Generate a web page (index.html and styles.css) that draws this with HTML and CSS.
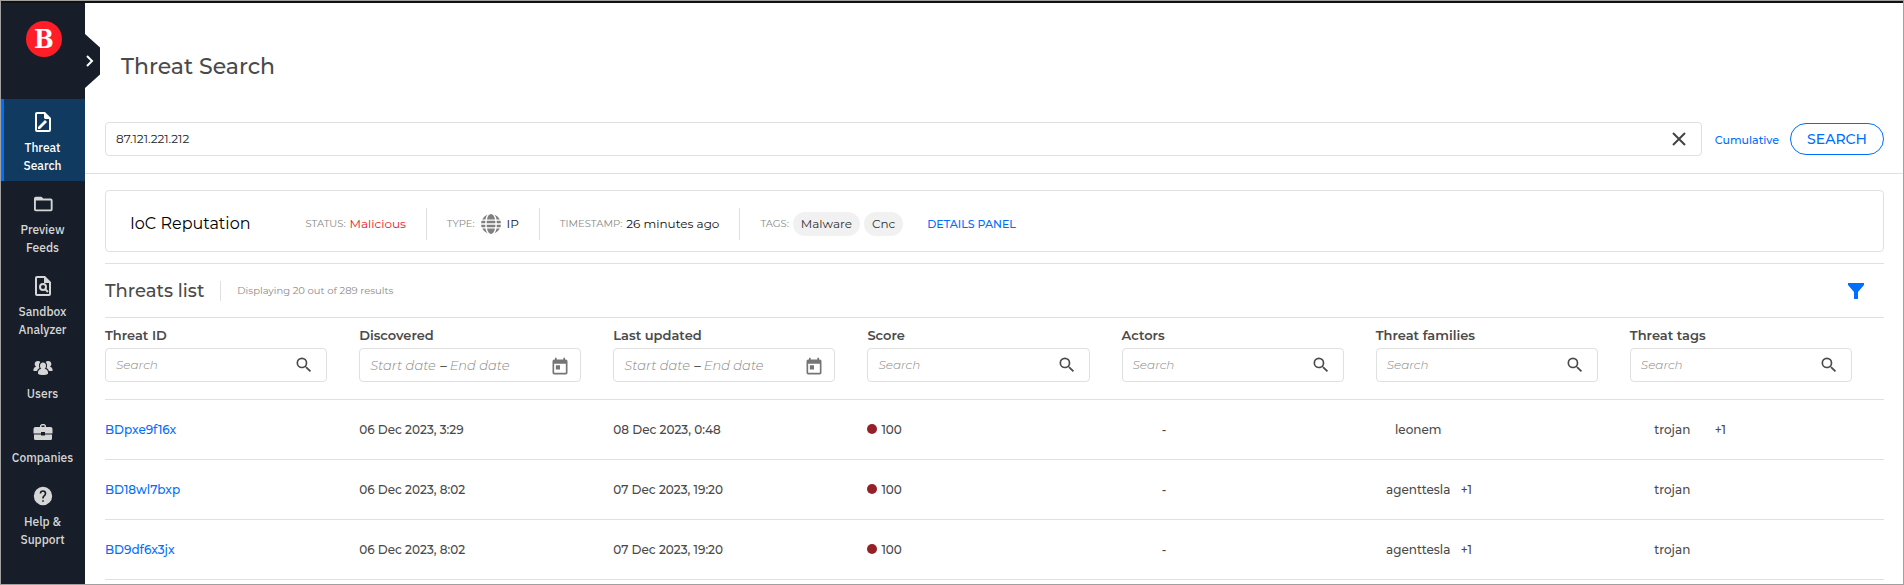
FILE: index.html
```html
<!DOCTYPE html>
<html lang="en">
<head>
    <meta charset="UTF-8">
    <meta name="viewport" content="width=device-width, initial-scale=1.0">
    <title>Threat Search</title>
    <link rel="stylesheet" href="styles.css">
</head>
<body>
    <!-- Shared icons -->
    <svg class="sprite" aria-hidden="true">
        <symbol id="icon-search" viewBox="0 0 24 24">
            <path d="M15.500 14h-.79l-.28-.27A6.470 6.470 0 0 0 16 9.500 6.500 6.500 0 1 0 9.500 16c1.610 0 3.090-.59 4.230-1.570l.27.28v.79l5 4.990L20.490 19l-4.990-5zm-6 0A4.500 4.500 0 1 1 14 9.500 4.490 4.490 0 0 1 9.500 14z"/>
        </symbol>
        <symbol id="icon-calendar" viewBox="0 0 24 24">
            <path d="M19 3h-1V1h-2v2H8V1H6v2H5a2 2 0 0 0-2 2v14a2 2 0 0 0 2 2h14a2 2 0 0 0 2-2V5a2 2 0 0 0-2-2zm0 16H5V8h14v11zM7 10h5v5H7z"/>
        </symbol>
    </svg>

    <div class="app">
        <aside class="sidebar">
            <a href="#" class="logo" aria-label="Home">B</a>
            <button type="button" class="expand" aria-label="Expand menu">
                <svg width="8" height="14" viewBox="0 0 8 14"><path d="M1 2l5 5-5 5"/></svg>
            </button>
            <nav>
                <a href="#" class="nav-item active">
                    <svg viewBox="0 0 20 20">
                        <path fill-rule="evenodd" d="M4 0h8l6 6v12a2 2 0 0 1-2 2H4a2 2 0 0 1-2-2V2a2 2 0 0 1 2-2zm0 2v16h12V7h-4l-1-1V2z"/>
                        <path d="M5 15v2h2l7-7-2-2z"/>
                    </svg>
                    Threat Search
                </a>
                <a href="#" class="nav-item">
                    <svg viewBox="0 0 20 20">
                        <path fill-rule="evenodd" d="M2 2h6l2 2h8a2 2 0 0 1 2 2v10a2 2 0 0 1-2 2H2a2 2 0 0 1-2-2V4a2 2 0 0 1 2-2zm0 4v10h16V6z" transform="translate(1 1) scale(.93 .9)"/>
                    </svg>
                    Preview Feeds
                </a>
                <a href="#" class="nav-item">
                    <svg viewBox="0 0 20 20">
                        <path fill-rule="evenodd" d="M4 0h8l6 6v12a2 2 0 0 1-2 2H4a2 2 0 0 1-2-2V2a2 2 0 0 1 2-2zm0 2v16h12V7h-5V2z"/>
                        <circle cx="10" cy="11" r="3" fill="none" stroke="currentColor" stroke-width="2"/>
                        <path d="M12 13l3 3" stroke="currentColor" stroke-width="2"/>
                    </svg>
                    Sandbox Analyzer
                </a>
                <a href="#" class="nav-item">
                    <svg viewBox="0 0 20 20">
                        <path d="M5 3a3 3 0 0 1 2.300 1A5 5 0 0 0 6 8.500l.5 1.500A5 5 0 0 0 4 13H.5v-2A4 4 0 0 1 3 8.500 3 3 0 0 1 5 3zM15 3a3 3 0 0 0-2.300 1A5 5 0 0 1 14 8.500l-.5 1.500a5 5 0 0 1 2.500 3h3.500v-2A4 4 0 0 0 17 8.500 3 3 0 0 0 15 3z"/>
                        <path d="M10 4.500c2 0 3 1.500 3 3.200 0 1.300-.5 2.300-1.300 3 2 .6 3.300 1.800 3.300 3.800v1.200c-1.500 1-3 1.300-5 1.300s-3.500-.3-5-1.300v-1.200c0-2 1.300-3.200 3.300-3.800C7.500 10 7 9 7 7.700c0-1.700 1-3.200 3-3.200z"/>
                    </svg>
                    Users
                </a>
                <a href="#" class="nav-item">
                    <svg viewBox="0 0 20 20">
                        <path fill-rule="evenodd" d="M7 5V3.500L8.500 2h3L13 3.500V5h4.500a2 2 0 0 1 2 2v4.500H12V10H8v1.500H.5V7a2 2 0 0 1 2-2zm1.500 0h3V3.500h-3z"/>
                        <path d="M1 12.500h7v1h4v-1h7v4a1.500 1.500 0 0 1-1.500 1.500h-15A1.500 1.500 0 0 1 1 16.500z"/>
                    </svg>
                    Companies
                </a>
                <a href="#" class="nav-item">
                    <svg viewBox="0 0 24 24">
                        <path d="M12 1a11 11 0 1 0 0 22 11 11 0 0 0 0-22zm1 18h-2v-2h2v2zm2.070-7.750l-.9.920C13.450 12.900 13 13.500 13 15h-2v-.5c0-1.100.45-2.100 1.170-2.830l1.240-1.260A2 2 0 1 0 10 9H8a4 4 0 1 1 8 0c0 .88-.36 1.680-.93 2.250z"/>
                    </svg>
                    Help &amp; Support
                </a>
            </nav>
        </aside>

        <main>
            <h1>Threat Search</h1>

            <form class="search-bar">
                <div class="search-box">
                    <input type="text" value="87.121.221.212" aria-label="Search threats">
                    <button type="button" class="clear" aria-label="Clear">
                        <svg width="14" height="14" viewBox="0 0 14 14"><path d="M1 1l12 12M13 1L1 13"/></svg>
                    </button>
                </div>
                <a href="#" class="cumulative">Cumulative</a>
                <button type="button" class="search-btn">SEARCH</button>
            </form>

            <div class="content">
                <section class="reputation">
                    <h2>IoC Reputation</h2>
                    <div class="fact"><span class="key">STATUS:</span><span class="malicious">Malicious</span></div>
                    <div class="fact">
                        <span class="key">TYPE:</span>
                        <svg class="globe" width="20" height="20" viewBox="0 0 24 24">
                            <path d="M12 0C9.500 0 7.800 3 7.200 6.500h9.600C16.200 3 14.500 0 12 0zM8 .7A12 12 0 0 0 1.400 6.500h4C5.900 4 6.800 2 8 .7zM16 .7c1.200 1.300 2.100 3.300 2.600 5.800h4A12 12 0 0 0 16 .7zM.7 8.200a12 12 0 0 0-.6 2.900h5L5.200 8.200zM6.900 8.200l-.2 2.900h10.600l-.2-2.900zM18.800 8.200l.1 2.900h5a12 12 0 0 0-.6-2.900zM.1 12.900a12 12 0 0 0 .6 2.900h4.500L5.100 12.900zM6.700 12.900l.2 2.900h10.200l.2-2.900zM18.900 12.900l-.1 2.900h4.500a12 12 0 0 0 .6-2.900zM1.400 17.500A12 12 0 0 0 8 23.300C6.800 22 5.900 20 5.400 17.500zM7.200 17.500C7.800 21 9.500 24 12 24s4.200-3 4.800-6.500zM18.600 17.500C18.100 20 17.200 22 16 23.300a12 12 0 0 0 6.600-5.800z"/>
                        </svg>
                        <span>IP</span>
                    </div>
                    <div class="fact"><span class="key">TIMESTAMP:</span><span>26 minutes ago</span></div>
                    <div class="fact"><span class="key">TAGS:</span><span class="tag">Malware</span><span class="tag">Cnc</span></div>
                    <a href="#" class="details">DETAILS PANEL</a>
                </section>

                <div class="list-header">
                    <h2>Threats list</h2>
                    <span class="count">Displaying 20 out of 289 results</span>
                    <button type="button" class="filter" aria-label="Filter">
                        <svg width="16" height="16" viewBox="0 0 16 16"><path d="M0 0h16v2l-6 7v7H6V9L0 2z"/></svg>
                    </button>
                </div>

                <table>
                    <thead>
                        <tr>
                            <th>
                                <label for="threatId">Threat ID</label>
                                <div class="field"><input type="text" id="threatId" placeholder="Search"><svg><use href="#icon-search"/></svg></div>
                            </th>
                            <th>
                                <label for="discovered">Discovered</label>
                                <div class="field dates"><input type="text" id="discovered" placeholder="Start date"><span>–</span><input type="text" placeholder="End date" aria-label="Discovered end date"><svg><use href="#icon-calendar"/></svg></div>
                            </th>
                            <th>
                                <label for="updated">Last updated</label>
                                <div class="field dates"><input type="text" id="updated" placeholder="Start date"><span>–</span><input type="text" placeholder="End date" aria-label="Last updated end date"><svg><use href="#icon-calendar"/></svg></div>
                            </th>
                            <th>
                                <label for="score">Score</label>
                                <div class="field"><input type="text" id="score" placeholder="Search"><svg><use href="#icon-search"/></svg></div>
                            </th>
                            <th>
                                <label for="actors">Actors</label>
                                <div class="field"><input type="text" id="actors" placeholder="Search"><svg><use href="#icon-search"/></svg></div>
                            </th>
                            <th>
                                <label for="families">Threat families</label>
                                <div class="field"><input type="text" id="families" placeholder="Search"><svg><use href="#icon-search"/></svg></div>
                            </th>
                            <th>
                                <label for="tags">Threat tags</label>
                                <div class="field"><input type="text" id="tags" placeholder="Search"><svg><use href="#icon-search"/></svg></div>
                            </th>
                        </tr>
                    </thead>
                    <tbody>
                        <tr>
                            <td><a href="#">BDpxe9f16x</a></td>
                            <td>06 Dec 2023, 3:29</td>
                            <td>08 Dec 2023, 0:48</td>
                            <td><span class="dot"></span>100</td>
                            <td><span class="chip">-</span></td>
                            <td><span class="chip">leonem</span></td>
                            <td><span class="chip">trojan</span><span class="more">+1</span></td>
                        </tr>
                        <tr>
                            <td><a href="#">BD18wl7bxp</a></td>
                            <td>06 Dec 2023, 8:02</td>
                            <td>07 Dec 2023, 19:20</td>
                            <td><span class="dot"></span>100</td>
                            <td><span class="chip">-</span></td>
                            <td><span class="chip">agenttesla</span><span class="more">+1</span></td>
                            <td><span class="chip">trojan</span></td>
                        </tr>
                        <tr>
                            <td><a href="#">BD9df6x3jx</a></td>
                            <td>06 Dec 2023, 8:02</td>
                            <td>07 Dec 2023, 19:20</td>
                            <td><span class="dot"></span>100</td>
                            <td><span class="chip">-</span></td>
                            <td><span class="chip">agenttesla</span><span class="more">+1</span></td>
                            <td><span class="chip">trojan</span></td>
                        </tr>
                    </tbody>
                </table>
            </div>
        </main>
    </div>
</body>
</html>
```
FILE: styles.css
```css
* {
    box-sizing: border-box;
}
body {
    margin: 0;
    font-family: Montserrat, Inter, sans-serif;
    font-size: 12px;
    font-weight: 500;
    line-height: 18px;
    color: #4a4a4a;
    background: #fff;
}
h1, h2 {
    margin: 0;
    font-weight: 500;
}
a {
    color: #006eff;
    text-decoration: none;
}
button, input {
    font: inherit;
    color: inherit;
    border: none;
    background: none;
    padding: 0;
}
button {
    cursor: pointer;
}
svg {
    flex: none;
    display: block;
}
.sprite {
    display: none;
}
.app {
    display: flex;
    min-height: 100vh;
    border: 1px solid #a0a0a0;
}

/* Sidebar */
.sidebar {
    position: relative;
    flex: none;
    width: 84px;
    background: #171e29;
    border-top: 2px solid #111;
}
.logo {
    display: flex;
    align-items: center;
    justify-content: center;
    width: 36px;
    height: 36px;
    margin: 18px auto 42px 25px;
    border-radius: 50%;
    background: #ff1e27;
    color: #fff;
    font: bold 26px "DejaVu Serif Condensed", "DejaVu Serif", serif;
}
.expand {
    position: absolute;
    top: 31px;
    left: 84px;
    width: 15px;
    height: 54px;
    padding-left: 1px;
    background: #171e29;
    clip-path: polygon(0 0, 100% 25%, 100% 75%, 0 100%);
}
.expand svg {
    fill: none;
    stroke: #fff;
    stroke-width: 2;
}
.nav-item {
    display: flex;
    flex-direction: column;
    align-items: center;
    gap: 7px;
    padding: 13px 16px 6px 12px;
    border-left: 3px solid transparent;
    color: #d6d6d6;
    font-family: "IBM Plex Sans", Roboto, sans-serif;
    font-size: 12px;
    font-weight: 500;
    text-align: center;
}
.nav-item svg {
    width: 20px;
    height: 20px;
    fill: currentColor;
}
.nav-item.active {
    background: #103a60;
    border-color: #006eff;
    color: #fff;
}

/* Search */
main {
    flex: 1;
    min-width: 0;
    border-top: 2px solid #111;
}
h1 {
    padding: 49px 36px 41px;
    font-size: 22px;
    line-height: 29px;
}
.search-bar {
    display: flex;
    align-items: center;
    padding: 0 19px 17px 20px;
    border-bottom: 1px solid #e0e0e0;
}
.search-box {
    display: flex;
    flex: 1;
    height: 34px;
    padding: 0 15px 0 10px;
    border: 1px solid #e0e0e0;
    border-radius: 4px;
    color: #222;
    font-weight: 400;
}
.search-box input {
    flex: 1;
    outline: none;
}
.clear svg {
    stroke: #444;
    stroke-width: 2;
}
.cumulative {
    margin: 2px 11px 0 13px;
    font-size: 11px;
}
.search-btn {
    width: 94px;
    height: 32px;
    border: 1px solid #006eff;
    border-radius: 16px;
    color: #006eff;
    font-size: 14px;
}

/* Reputation card */
.content {
    padding: 16px 19px 0 20px;
}
.reputation {
    display: flex;
    align-items: center;
    height: 62px;
    padding: 5px 0 0 24px;
    margin-bottom: 11px;
    border: 1px solid #e0e0e0;
    border-radius: 4px;
    color: #111;
    font-weight: 400;
}
.reputation h2 {
    margin-right: 35px;
    font-size: 16px;
    font-weight: 400;
    color: #000;
}
.fact {
    display: flex;
    align-items: center;
    gap: 4px;
    height: 32px;
    padding: 0 20px;
}
.fact + .fact {
    border-left: 1px solid #e0e0e0;
}
.key {
    font-size: 10px;
    color: #8a8a8a;
}
.malicious {
    color: #f0141e;
}
.globe {
    margin: 0 2px;
    fill: #808080;
}
.tag {
    padding: 3px 8px;
    border-radius: 12px;
    background: #f1f1f1;
    color: #333;
}
.details {
    margin-left: 4px;
    font-size: 11px;
    font-weight: 500;
}

/* Threats table */
.list-header {
    display: flex;
    align-items: center;
    height: 55px;
    border: solid #e0e0e0;
    border-width: 1px 0;
}
.list-header h2 {
    padding-right: 16px;
    border-right: 1px solid #e0e0e0;
    font-size: 18px;
    line-height: 20px;
}
.count {
    margin-left: 16px;
    font-size: 10px;
    font-weight: 400;
    color: #8a8a8a;
}
.filter {
    margin: 0 20px 0 auto;
}
.filter svg {
    fill: #006eff;
}
table {
    width: 100%;
    table-layout: fixed;
    border-collapse: separate;
    border-spacing: 0;
}
th {
    padding: 8px 32px 17px 0;
    border-bottom: 1px solid #e0e0e0;
    text-align: left;
}
label {
    display: block;
    margin-bottom: 4px;
    font-size: 13px;
    font-weight: 600;
}
.field {
    display: flex;
    align-items: center;
    height: 34px;
    padding: 0 12px 0 10px;
    border: 1px solid #e0e0e0;
    border-radius: 4px;
    font-weight: 300;
}
.field input {
    flex: 1;
    min-width: 0;
    outline: none;
}
.field input::placeholder {
    color: #888;
    font-style: italic;
    opacity: 1;
}
.field svg {
    width: 20px;
    height: 20px;
    fill: #4a4a4a;
}
.dates {
    gap: 3px;
    padding-right: 10px;
    font-size: 13px;
}
.dates span {
    font-weight: 500;
}
.dates input:first-child {
    flex: none;
    width: 67px;
}
.dates svg {
    margin-top: 4px;
    fill: #757575;
}
td {
    height: 60px;
    padding: 0;
    border-bottom: 1px solid #e0e0e0;
}
.dot {
    display: inline-block;
    width: 10px;
    height: 10px;
    margin-right: 4px;
    border-radius: 50%;
    background: #932127;
}
.chip {
    display: inline-block;
    width: 85px;
    text-align: center;
}
```
